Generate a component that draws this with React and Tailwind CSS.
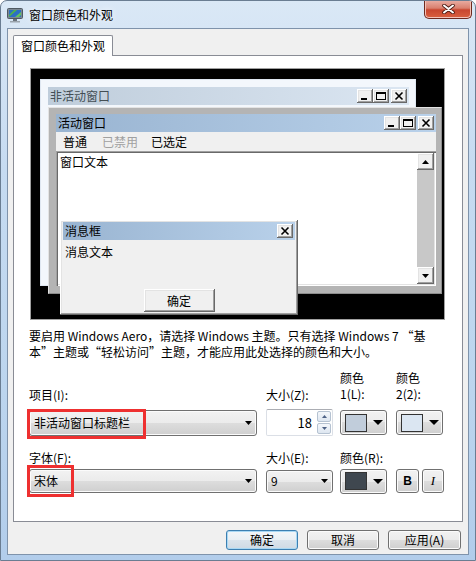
import React from "react";

const raised =
  "bg-[#f0f0f0] shadow-[inset_-1px_-1px_0_#696969,inset_1px_1px_0_#ffffff,inset_-2px_-2px_0_#a0a0a0,inset_2px_2px_0_#e3e3e3]";
const sunken =
  "bg-white shadow-[inset_1px_1px_0_#a0a0a0,inset_2px_2px_0_#696969,inset_-1px_-1px_0_#ffffff,inset_-2px_-2px_0_#e3e3e3]";
const win7Btn =
  "border border-[#707070] rounded-[3px] bg-[linear-gradient(to_bottom,#f2f2f2_0%,#ebebeb_50%,#dddddd_50%,#cfcfcf_100%)] shadow-[inset_0_0_0_1px_#fbfbfb]";

const MinGlyph = () => (
  <svg width="16" height="14" className="block">
    <rect x="4" y="9" width="6" height="2" fill="#000" />
  </svg>
);

const MaxGlyph = () => (
  <svg width="16" height="14" className="block">
    <rect x="3.5" y="3.5" width="9" height="7" fill="none" stroke="#000" />
    <rect x="3" y="3" width="10" height="2" fill="#000" />
  </svg>
);

const CloseGlyph = () => (
  <svg width="16" height="14" className="block">
    <path d="M4.5 3.5l7 7M11.5 3.5l-7 7" stroke="#000" strokeWidth="1.6" />
  </svg>
);

const CaptionButtons = () => (
  <div className="flex items-center">
    <div className={`${raised} w-[16px] h-[14px]`}>
      <MinGlyph />
    </div>
    <div className={`${raised} w-[16px] h-[14px]`}>
      <MaxGlyph />
    </div>
    <div className={`${raised} w-[16px] h-[14px] ml-[2px]`}>
      <CloseGlyph />
    </div>
  </div>
);

const Arrow = ({ w = 7, h = 4, up = false }) => (
  <svg width={w} height={h} className="block">
    <path d={up ? `M0 ${h}H${w}L${w / 2} 0z` : `M0 0H${w}L${w / 2} ${h}z`} fill="#000" />
  </svg>
);

const AppIcon = () => (
  <svg width="16" height="16" viewBox="0 0 16 16" className="block">
    <rect x="0.5" y="1.5" width="15" height="10" rx="1" fill="#7d8994" stroke="#4f5962" />
    <rect x="2" y="3" width="12" height="7" fill="#2c6fc4" />
    <path d="M2 8l5-5h3l-8 7z" fill="#4fb34a" />
    <path d="M8 10l6-5v3l-2 2z" fill="#63c35a" />
    <rect x="6" y="12" width="4" height="2" fill="#6b747d" />
    <rect x="3" y="14" width="10" height="1.5" fill="#9aa4ad" />
  </svg>
);

const Combo = ({ text, className }) => (
  <div className={`${win7Btn} flex items-center justify-between pl-[4px] pr-[4px] ${className}`}>
    <span>{text}</span>
    <Arrow />
  </div>
);

const ColorButton = ({ color }) => (
  <div className={`${win7Btn} w-[47px] h-[25px] flex items-center pl-[4px] pr-[3px]`}>
    <div className="w-[22px] h-[18px] border border-[#333]" style={{ background: color }} />
    <div className="ml-auto">
      <Arrow w={10} h={5} />
    </div>
  </div>
);

export default function App() {
  return (
    <div className="w-[476px] h-[561px] overflow-hidden rounded-t-[7px] border border-[#6a7d92] bg-[linear-gradient(to_bottom,#dae8f6,#c6dbf1_30%,#bcd5ee_70%,#b2cdeb)] font-[family-name:'Noto_Sans_CJK_SC',sans-serif] text-[12px] text-black">
      <div className="flex h-[27px]">
        <div className="flex items-center pl-[6px] gap-[6px] h-[27px]">
          <AppIcon />
          <span className="[text-shadow:0_0_6px_#ffffff]">窗口颜色和外观</span>
        </div>
        <div className="ml-auto mr-[3px] -mt-px w-[48px] h-[19px] rounded-b-[5px] border border-t-0 border-[#6e2a20] bg-[linear-gradient(to_bottom,#eab0a6,#d9806f_45%,#c8462f_55%,#d9603f)] shadow-[inset_0_0_0_1px_#f3c2b8] flex items-center justify-center">
          <svg width="13" height="10" className="block">
            <path d="M2 1.5l9 7M11 1.5l-9 7" stroke="#4a1a12" strokeWidth="3.6" strokeLinecap="round" />
            <path d="M2 1.5l9 7M11 1.5l-9 7" stroke="#ffffff" strokeWidth="2" strokeLinecap="round" />
          </svg>
        </div>
      </div>

      <div className="ml-[6px] w-[462px] h-[527px] border border-[#7f93ab] bg-[#f0f0f0] flex flex-col">
        <div className="pl-[5px] pt-[6px] flex">
          <div className="relative z-10 -mb-px w-[100px] h-[21px] bg-white border border-b-0 border-[#898c95] rounded-t-[2px] flex items-center justify-center">
            窗口颜色和外观
          </div>
        </div>

        <div className="ml-[5px] w-[450px] h-[467px] bg-white border border-[#898c95]">
          {/* preview */}
          <div className="relative ml-[16px] mt-[12px] w-[415px] h-[252px] border border-[#a0a0a0] bg-black leading-none">
            <div className="absolute left-[9px] top-[10px] w-[376px] h-[207px] bg-[#f3f7fc] border border-[#dfe7f1] pt-[7px] pl-[7px] pr-[6px]">
              <div className="h-[18px] flex items-center justify-between pl-[2px] pr-[2px] bg-[linear-gradient(to_right,#bfcddb,#dbe6f2)] text-[#434e54]">
                <span>非活动窗口</span>
                <CaptionButtons />
              </div>
            </div>

            <div className="absolute left-[17px] top-[38px] w-[394px] h-[187px] bg-[#b4b4b4] border border-t-[#e3e3e3] border-l-[#e3e3e3] border-r-[#8c8c8c] border-b-[#8c8c8c] pt-[6px] pl-[7px] pr-[5px] pb-[7px] flex flex-col">
              <div className="h-[18px] flex items-center justify-between pl-[2px] pr-[2px] bg-[linear-gradient(to_right,#99b4d1,#b9d1ea)]">
                <span>活动窗口</span>
                <CaptionButtons />
              </div>
              <div className="h-[19px] bg-[#f0f0f0] flex items-center">
                <span className="ml-[7px]">普通</span>
                <span className="ml-[15px] text-[#a0a0a0]">已禁用</span>
                <span className="ml-[13px]">已选定</span>
              </div>
              <div className={`${sunken} flex-1 flex p-[2px]`}>
                <div className="flex-1 pl-[2px] pt-[3px]">窗口文本</div>
                <div className="w-[17px] bg-[#c8c8c8] flex flex-col justify-between">
                  <div className={`${raised} h-[17px] flex items-center justify-center`}>
                    <Arrow up />
                  </div>
                  <div className={`${raised} h-[17px] flex items-center justify-center`}>
                    <Arrow />
                  </div>
                </div>
              </div>
            </div>

            <div className={`${raised} absolute left-[29px] top-[151px] w-[238px] h-[95px] p-[3px] pt-[2px] flex flex-col`}>
              <div className="h-[18px] flex items-center justify-between pl-[2px] pr-[2px] bg-[linear-gradient(to_right,#99b4d1,#b9d1ea)]">
                <span>消息框</span>
                <div className={`${raised} w-[16px] h-[14px]`}>
                  <CloseGlyph />
                </div>
              </div>
              <div className="mt-[6px] pl-[2px]">消息文本</div>
              <div className={`${raised} mt-auto self-center w-[71px] h-[23px] flex items-center justify-center`}>
                确定
              </div>
            </div>
          </div>

          <p className="ml-[15px] mt-[8px] leading-[16px]">
            要启用 Windows Aero，请选择 Windows 主题。只有选择 Windows 7 “基
            <br />
            本”主题或“轻松访问”主题，才能应用此处选择的颜色和大小。
          </p>

          {/* row 1 */}
          <div className="ml-[15px] mt-[10px] flex leading-[16px]">
            <div className="w-[228px] pt-[17px]">项目(I):</div>
            <div className="w-[67px] ml-[9px] pt-[17px]">大小(Z):</div>
            <div className="w-[47px] ml-[7px]">
              颜色
              <br />
              1(L):
            </div>
            <div className="w-[48px] ml-[9px]">
              颜色
              <br />
              2(2):
            </div>
          </div>
          <div className="ml-[15px] mt-[5px] h-[29px] flex items-center">
            <div className="relative w-[228px] h-[26px]">
              <Combo text="非活动窗口标题栏" className="w-full h-full" />
              <div className="absolute -left-[2px] -top-[1px] w-[119px] h-[30px] border-[3px] border-[#ee3030]" />
            </div>
            <div className="ml-[9px] w-[67px] h-[27px] bg-white border border-[#dbdfe6] border-t-[#abadb3] rounded-[2px] flex items-center">
              <span className="flex-1 text-right pr-[5px] text-[13px]">18</span>
              <div className="w-[14px] h-[23px] mr-[1px] flex flex-col gap-[1px]">
                <div className="flex-1 rounded-[2px] border border-[#b5c2d1] bg-[linear-gradient(to_bottom,#f4f7fb,#dde6f0)] flex items-center justify-center">
                  <svg width="5" height="3" className="block">
                    <path d="M0 3h5L2.5 0z" fill="#4d6185" />
                  </svg>
                </div>
                <div className="flex-1 rounded-[2px] border border-[#b5c2d1] bg-[linear-gradient(to_bottom,#f4f7fb,#dde6f0)] flex items-center justify-center">
                  <svg width="5" height="3" className="block">
                    <path d="M0 0h5L2.5 3z" fill="#4d6185" />
                  </svg>
                </div>
              </div>
            </div>
            <div className="ml-[7px]">
              <ColorButton color="#c1cddb" />
            </div>
            <div className="ml-[9px]">
              <ColorButton color="#dbe6f2" />
            </div>
          </div>

          {/* row 2 */}
          <div className="ml-[15px] mt-[13px] flex leading-[16px]">
            <div className="w-[228px]">字体(F):</div>
            <div className="w-[67px] ml-[9px]">大小(E):</div>
            <div className="ml-[7px]">颜色(R):</div>
          </div>
          <div className="ml-[15px] mt-[3px] h-[24px] flex items-center">
            <div className="relative w-[228px] h-[24px]">
              <Combo text="宋体" className="w-full h-full" />
              <div className="absolute -left-[2px] -top-[4px] w-[47px] h-[32px] border-[3px] border-[#ee3030]" />
            </div>
            <Combo text="9" className="ml-[9px] w-[67px] h-[23px]" />
            <div className="ml-[7px]">
              <ColorButton color="#3f474f" />
            </div>
            <div className={`${win7Btn} ml-[9px] w-[23px] h-[24px] flex items-center justify-center font-[family-name:'Liberation_Sans',sans-serif] font-bold text-[12px]`}>
              B
            </div>
            <div className={`${win7Btn} ml-[3px] w-[22px] h-[24px] flex items-center justify-center font-[family-name:'Liberation_Serif',serif] italic text-[13px]`}>
              I
            </div>
          </div>
        </div>

        <div className="mt-[8px] pr-[7px] flex justify-end gap-[9px]">
          <div className="w-[72px] h-[20px] rounded-[3px] border border-[#3c7fb1] bg-[linear-gradient(to_bottom,#f2f6f9_0%,#e9eff4_50%,#dbe4ec_50%,#cfdae4_100%)] shadow-[inset_0_0_0_1px_#a9d8f4] flex items-center justify-center">
            确定
          </div>
          <div className={`${win7Btn} w-[72px] h-[20px] flex items-center justify-center`}>取消</div>
          <div className={`${win7Btn} w-[73px] h-[20px] flex items-center justify-center`}>应用(A)</div>
        </div>
      </div>
    </div>
  );
}
